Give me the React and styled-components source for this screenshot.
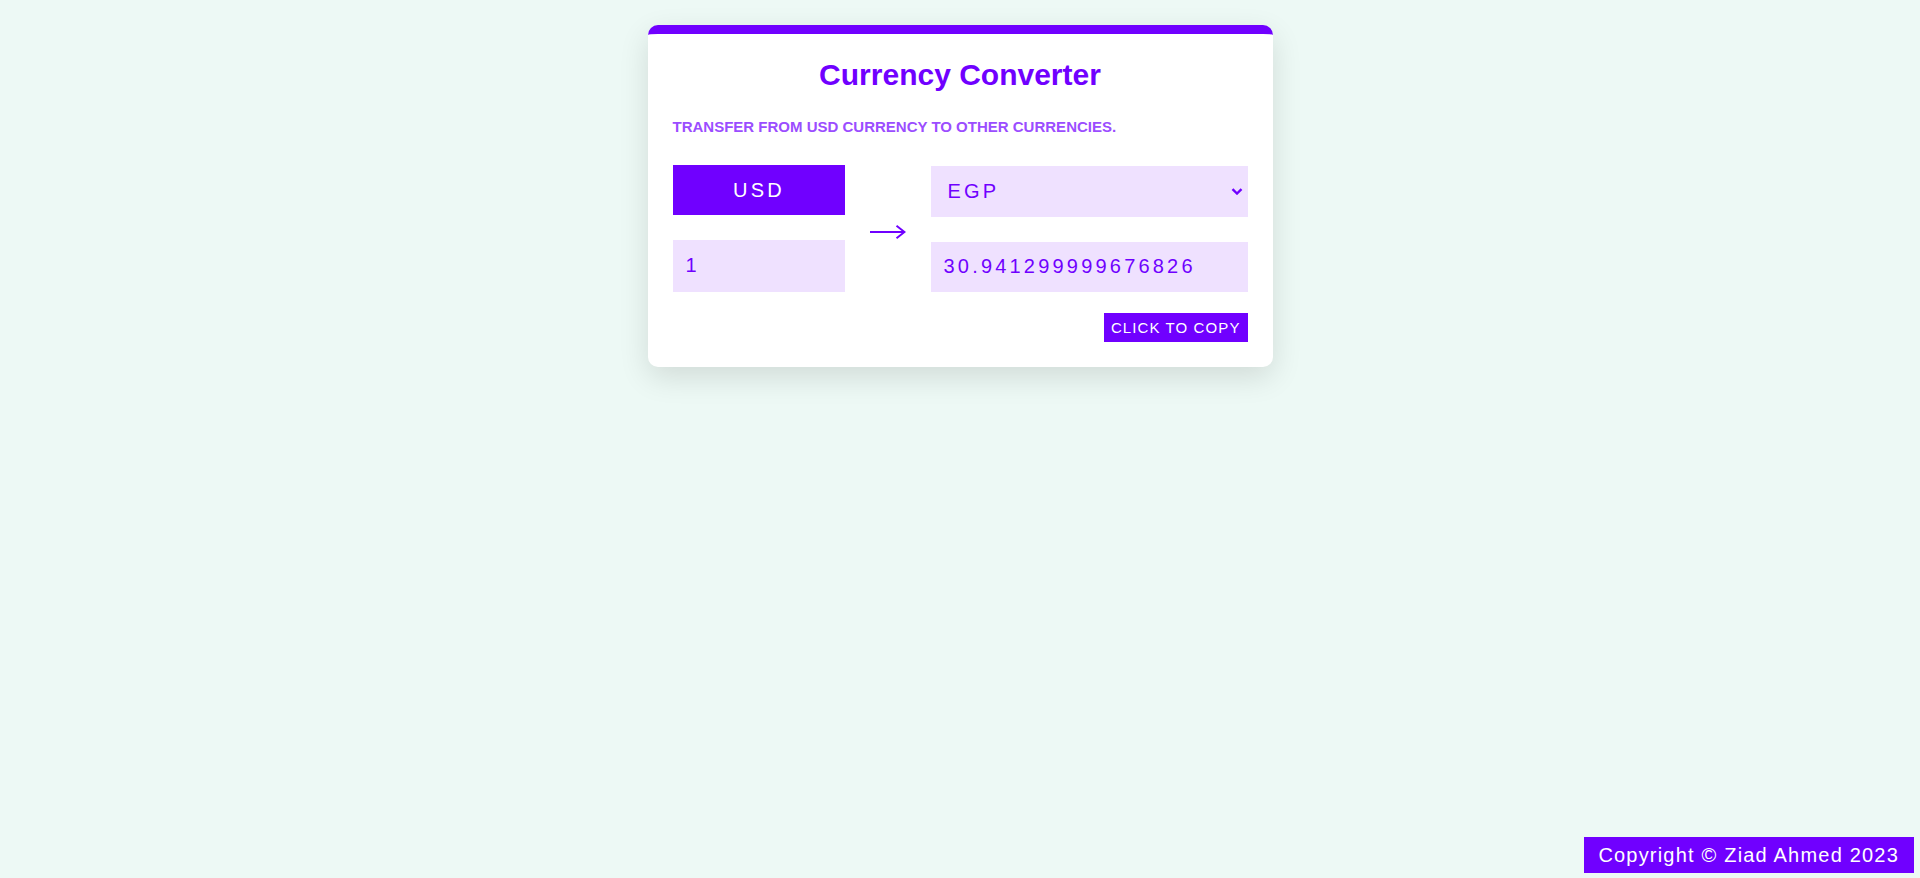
import React, { useState } from "react";
import styled, { createGlobalStyle } from "styled-components";

const PURPLE = "#7000ff";
const LAVENDER = "#efe1ff";

const GlobalStyle = createGlobalStyle`
  html, body {
    margin: 0;
    padding: 0;
    background: #edf9f5;
    font-family: "Liberation Sans", Arial, sans-serif;
  }
  * { box-sizing: border-box; }
`;

const Page = styled.div`
  min-height: 100vh;
  display: flex;
  flex-direction: column;
  align-items: center;
  padding: 25px 6px 5px;
`;

const Card = styled.section`
  width: 625px;
  background: #fff;
  border-top: 9px solid ${PURPLE};
  border-radius: 10px;
  box-shadow: 0 10px 30px rgba(0, 0, 0, 0.12);
  padding: 24px 25px 25px;
  display: flex;
  flex-direction: column;
`;

const Title = styled.h1`
  margin: 0;
  font-size: 30px;
  line-height: 34px;
  font-weight: 700;
  color: ${PURPLE};
  text-align: center;
`;

const Subtitle = styled.p`
  margin: 26px 0 0;
  font-size: 15px;
  line-height: 17px;
  font-weight: 700;
  color: #9b4dff;
  text-transform: uppercase;
`;

const Converter = styled.div`
  margin-top: 30px;
  display: grid;
  grid-template-columns: 172px 86px 317px;
  align-items: end;
`;

const Column = styled.div`
  display: flex;
  flex-direction: column;
  gap: 25px;
`;

const ArrowCell = styled.div`
  align-self: stretch;
  display: flex;
  align-items: center;
  justify-content: center;
  padding-top: 6px;
`;

const Badge = styled.div`
  height: 50px;
  background: ${PURPLE};
  color: #fff;
  font-size: 20px;
  letter-spacing: 3.2px;
  display: flex;
  align-items: center;
  justify-content: center;
  padding-left: 1px;
`;

const Field = styled.input`
  height: ${(p) => p.$h}px;
  width: 100%;
  border: none;
  outline: none;
  background: ${LAVENDER};
  color: ${PURPLE};
  font-family: "Liberation Sans", Arial, sans-serif;
  font-size: 20px;
  letter-spacing: 3.2px;
  padding: 0 13px 2px;
`;

const SelectWrap = styled.div`
  position: relative;
  height: 51px;
`;

const Select = styled.select`
  appearance: none;
  -webkit-appearance: none;
  width: 100%;
  height: 100%;
  border: none;
  outline: none;
  border-radius: 0;
  background: ${LAVENDER};
  color: ${PURPLE};
  font-family: "Liberation Sans", Arial, sans-serif;
  font-size: 20px;
  letter-spacing: 3.2px;
  padding: 0 30px 2px 17px;
`;

const Chevron = styled.svg`
  position: absolute;
  right: 5px;
  top: 50%;
  margin-top: -4px;
  pointer-events: none;
`;

const CopyRow = styled.div`
  margin-top: 21px;
  display: flex;
  justify-content: flex-end;
`;

const CopyButton = styled.button`
  height: 29px;
  padding: 0 7px 0 7px;
  border: none;
  background: ${PURPLE};
  color: #fff;
  font-family: "Liberation Sans", Arial, sans-serif;
  font-size: 15px;
  letter-spacing: 1.1px;
  text-transform: uppercase;
  cursor: pointer;
`;

const Footer = styled.footer`
  margin-top: auto;
  align-self: flex-end;
  height: 36px;
  line-height: 36px;
  padding: 0 15px 0 14px;
  background: ${PURPLE};
  color: #fff;
  font-size: 20px;
  letter-spacing: 1.2px;
`;

export default function App() {
  const [amount, setAmount] = useState("1");
  const [currency, setCurrency] = useState("EGP");
  const rate = 30.941299999676826;
  const result = currency === "EGP" ? String(Number(amount || 0) * rate) : "";

  return (
    <>
      <GlobalStyle />
      <Page>
        <Card>
          <Title>Currency Converter</Title>
          <Subtitle>Transfer from USD currency to other currencies.</Subtitle>
          <Converter>
            <Column>
              <Badge>USD</Badge>
              <Field $h={52} value={amount} onChange={(e) => setAmount(e.target.value)} />
            </Column>
            <ArrowCell>
              <svg width="37" height="16" viewBox="0 0 37 16" fill="none">
                <path d="M1 8H35" stroke={PURPLE} strokeWidth="2" />
                <path d="M27.5 1.8L35.5 8L27.5 14.2" stroke={PURPLE} strokeWidth="2" strokeLinejoin="miter" />
              </svg>
            </ArrowCell>
            <Column>
              <SelectWrap>
                <Select value={currency} onChange={(e) => setCurrency(e.target.value)}>
                  <option value="EGP">EGP</option>
                  <option value="EUR">EUR</option>
                  <option value="GBP">GBP</option>
                  <option value="SAR">SAR</option>
                </Select>
                <Chevron width="12" height="7" viewBox="0 0 12 7">
                  <path d="M1.5 1.2L6 5.5L10.5 1.2" stroke={PURPLE} strokeWidth="2.4" fill="none" />
                </Chevron>
              </SelectWrap>
              <Field $h={50} value={result} readOnly />
            </Column>
          </Converter>
          <CopyRow>
            <CopyButton>Click to copy</CopyButton>
          </CopyRow>
        </Card>
        <Footer>Copyright © Ziad Ahmed 2023</Footer>
      </Page>
    </>
  );
}
